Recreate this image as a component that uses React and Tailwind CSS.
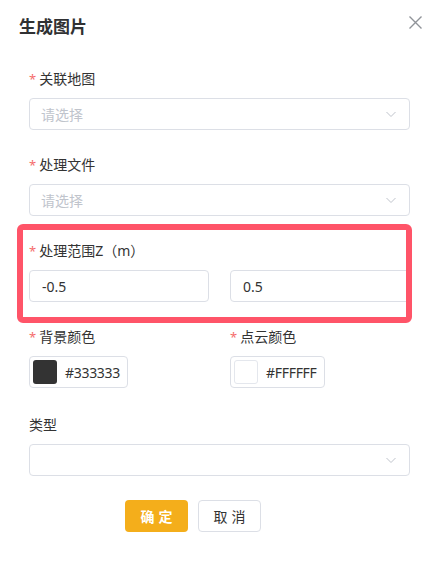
import React from 'react';

const font = { fontFamily: '"Noto Sans", "Noto Sans CJK SC", sans-serif' };

const Chevron = () => (
    <svg width="12" height="12" viewBox="0 0 12 12" className="text-[#c0c4cc]">
        <path d="M1.5 4 L6 8.5 L10.5 4" fill="none" stroke="currentColor" strokeWidth="1" />
    </svg>
);

const Label = ({ required, children }) => (
    <div className="h-[22px] text-[14px] leading-[22px] text-[#333] flex items-center">
        {required && <span className="text-[#f56c6c] mr-[3px] text-[13px]">*</span>}
        {children}
    </div>
);

const Select = ({ placeholder }) => (
    <div className="mt-2 h-8 w-full border border-[#dcdfe6] rounded-[4px] flex items-center justify-between pl-[11px] pr-[12px]">
        <span className="text-[14px] text-[#c0c4cc]">{placeholder}</span>
        <Chevron />
    </div>
);

const ColorPicker = ({ color, swatch }) => (
    <div className="mt-2 h-8 w-fit flex items-center gap-2 border border-[#dcdfe6] rounded-[4px] pl-[3px] pr-[7px]">
        <span className={`w-6 h-6 rounded-[3px] ${swatch}`} />
        <span className="text-[14px] text-[#333] tracking-[-0.3px]">{color}</span>
    </div>
);

const App = () => {
    return (
        <div className="relative w-[445px] h-[576px] bg-white" style={font}>
            <div className="h-[39px] pt-[15px] pl-[19px] pr-[23px] flex justify-between items-start">
                <h1 className="text-[17px] leading-6 font-bold text-[#303133]">生成图片</h1>
                <svg width="13" height="13" viewBox="0 0 13 13" className="mt-[1px] text-[#909399]">
                    <path d="M0.5 0.5 L12.5 12.5 M12.5 0.5 L0.5 12.5" stroke="currentColor" strokeWidth="1.4" />
                </svg>
            </div>

            <div className="ml-[29px] w-[381px] mt-[29px] flex flex-col gap-[24px]">
                <div>
                    <Label required>关联地图</Label>
                    <Select placeholder="请选择" />
                </div>
                <div>
                    <Label required>处理文件</Label>
                    <Select placeholder="请选择" />
                </div>
                <div>
                    <Label required>处理范围Z（m）</Label>
                    <div className="mt-2 grid grid-cols-2 gap-[21px]">
                        <div className="h-8 border border-[#dcdfe6] rounded-[4px] flex items-center pl-3 text-[14px] text-[#333]">-0.5</div>
                        <div className="h-8 border border-[#dcdfe6] rounded-[4px] flex items-center pl-3 text-[14px] text-[#333]">0.5</div>
                    </div>
                </div>
                <div className="grid grid-cols-2 gap-[21px]">
                    <div>
                        <Label required>背景颜色</Label>
                        <ColorPicker color="#333333" swatch="bg-[#333333]" />
                    </div>
                    <div>
                        <Label required>点云颜色</Label>
                        <ColorPicker color="#FFFFFF" swatch="bg-white border border-[#e4e7ed]" />
                    </div>
                </div>
                <div className="mt-[2px]">
                    <Label>类型</Label>
                    <Select placeholder="" />
                </div>
            </div>

            <div className="ml-[125px] mt-[24px] flex gap-[10px]">
                <button className="w-[63px] h-8 rounded-[4px] bg-[#f4ae1b] text-white text-[14px] font-bold tracking-[4px] pl-[4px]">确定</button>
                <button className="w-[63px] h-8 rounded-[4px] bg-white border border-[#dcdfe6] text-[#333] text-[14px] tracking-[4px] pl-[4px]">取消</button>
            </div>

            <div className="absolute left-[17px] top-[224px] w-[395px] h-[99px] border-[6px] border-[#ff5468] rounded-[6px]" />
        </div>
    );
};

export default App;
